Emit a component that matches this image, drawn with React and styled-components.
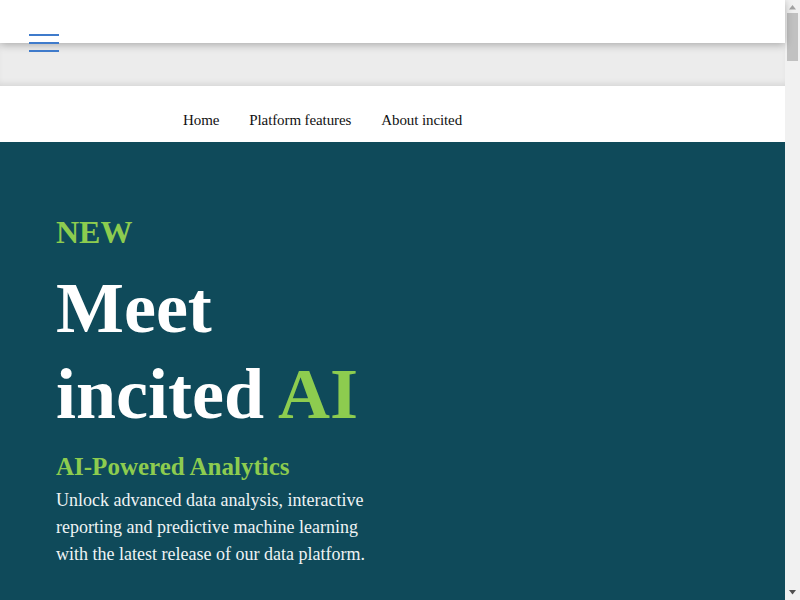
import React from 'react'
import styled, { createGlobalStyle } from 'styled-components'

const GlobalStyle = createGlobalStyle`
    html, body {
        margin: 0;
        padding: 0;
        overflow: hidden;
    }
    body {
        font-family: 'Liberation Serif', 'Times New Roman', serif;
        background: #ffffff;
    }
    * { box-sizing: border-box; }
`

const navItems = ['Home', 'Platform features', 'About incited']

export default function App() {
    return (
        <Page>
            <GlobalStyle />
            <Main>
                <TopBar>
                    <MenuButton aria-label="menu">
                        <MenuLine />
                        <MenuLine />
                        <MenuLine />
                    </MenuButton>
                </TopBar>
                <GreyBand />
                <Nav>
                    {navItems.map(item => (
                        <NavLink key={item} href="#">{item}</NavLink>
                    ))}
                </Nav>
                <Hero>
                    <Content>
                        <Tag>NEW</Tag>
                        <Title>
                            Meet<br />
                            incited <Green>AI</Green>
                        </Title>
                        <Subtitle>AI-Powered Analytics</Subtitle>
                        <Body>
                            Unlock advanced data analysis, interactive reporting and predictive machine learning
                            with the latest release of our data platform.
                        </Body>
                    </Content>
                </Hero>
            </Main>
            <ScrollTrack>
                <ScrollArrow viewBox="0 0 15 15">
                    <path d="M4 9.5 L7.5 5 L11 9.5 Z" fill="#a3a3a3" />
                </ScrollArrow>
                <ScrollBody>
                    <Thumb />
                </ScrollBody>
                <ScrollArrow viewBox="0 0 15 15">
                    <path d="M4 5 L7.5 9.5 L11 5 Z" fill="#505050" />
                </ScrollArrow>
            </ScrollTrack>
        </Page>
    )
}

const Page = styled.div`
    display: flex;
    height: 100vh;
    overflow: hidden;
`

const Main = styled.main`
    flex: 1;
    min-width: 0;
    background: #0f4a5a;
`

const ScrollTrack = styled.div`
    width: 15px;
    flex: none;
    display: flex;
    flex-direction: column;
    background: #f1f1f1;
`

const ScrollArrow = styled.svg`
    display: block;
    width: 15px;
    height: 15px;
    flex: none;
`

const ScrollBody = styled.div`
    flex: 1;
    padding: 0 2px;
`

const Thumb = styled.div`
    height: 48px;
    background: #c1c1c1;
    margin-top: -2px;
`

const TopBar = styled.header`
    position: relative;
    height: 43px;
    background: #ffffff;
    box-shadow: 0 2px 8px rgba(0, 0, 0, 0.28);
    z-index: 2;
`

const MenuButton = styled.button`
    position: absolute;
    left: 29px;
    top: 34px;
    width: 30px;
    padding: 0;
    border: none;
    background: transparent;
    display: flex;
    flex-direction: column;
    gap: 6px;
    cursor: pointer;
`

const MenuLine = styled.span`
    display: block;
    width: 30px;
    height: 2px;
    background: #3f7bcb;
`

const GreyBand = styled.div`
    height: 43px;
    background: #ececec;
    box-shadow: inset 0 -5px 6px -3px rgba(0, 0, 0, 0.1);
`

const Nav = styled.nav`
    height: 56px;
    background: #ffffff;
    display: flex;
    align-items: center;
    padding-left: 168px;
    padding-top: 12px;
`

const NavLink = styled.a`
    padding: 0 15px;
    font-size: 15px;
    color: #111111;
    text-decoration: none;
    letter-spacing: -0.1px;
`

const Hero = styled.section`
    background: #0f4a5a;
    padding: 74px 0 60px 56px;
`

const Content = styled.div`
    width: 330px;
`

const Tag = styled.div`
    font-size: 32px;
    line-height: 32px;
    font-weight: bold;
    color: #8dcc4f;
`

const Title = styled.h1`
    margin: 17px 0 0;
    font-size: 72px;
    line-height: 86px;
    font-weight: bold;
    color: #ffffff;
    white-space: nowrap;
`

const Green = styled.span`
    color: #8dcc4f;
`

const Subtitle = styled.h2`
    margin: 15px 0 0;
    font-size: 25px;
    line-height: 30px;
    font-weight: bold;
    color: #8dcc4f;
    white-space: nowrap;
`

const Body = styled.p`
    margin: 5px 0 0;
    font-size: 18px;
    line-height: 27px;
    color: #eef3f4;
`
